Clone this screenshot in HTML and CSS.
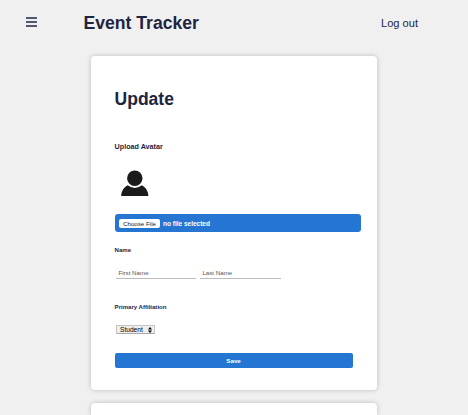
FILE: index.html
```html
<!DOCTYPE html>
<html lang="en">
<head>
<meta charset="utf-8">
<title>Event Tracker</title>
<link rel="stylesheet" href="styles.css">
</head>
<body>
<header class="header">
  <svg class="menu" viewBox="0 0 11 10"><path d="M0 1h11M0 5h11M0 9h11" stroke="#1f2440" stroke-width="1.700"/></svg>
  <h1 class="brand">Event Tracker</h1>
  <a class="logout">Log out</a>
</header>
<main class="content">
  <form class="card">
    <h2 class="title">Update</h2>
    <label class="label label-avatar">Upload Avatar</label>
    <svg class="avatar" viewBox="0 0 28 27"><path d="M.2 26c0-5 3-9.600 7.800-11.200h11.500c4.800 1.600 7.800 6.200 7.800 11.200z"/><ellipse cx="13.800" cy="8.500" rx="9.500" ry="9.600" fill="#fff"/><circle cx="13.800" cy="8.200" r="7.700"/></svg>
    <div class="file"><span class="choose">Choose File</span><span class="filename">no file selected</span></div>
    <label class="label label-name">Name</label>
    <div class="names">
      <div class="field">First Name</div>
      <div class="field">Last Name</div>
    </div>
    <label class="label label-affiliation">Primary Affiliation</label>
    <div class="select"><span>Student</span><svg class="arrows" viewBox="0 0 4 6"><path d="M0 2.500 2 0l2 2.500zM0 3.500 2 6l2-2.500z"/></svg></div>
    <div class="save">Save</div>
  </form>
  <section class="card card-next"></section>
</main>
</body>
</html>
```
FILE: styles.css
```css
* { box-sizing: border-box; }
body {
  margin: 0;
  height: 415px;
  overflow: hidden;
  background: #f0f0f0;
  color: #1f2440;
  font-family: "Liberation Sans", Arial, sans-serif;
}
.header {
  display: flex;
  align-items: center;
  height: 44px;
  padding: 0 50px 0 26px;
}
.menu { width: 11px; height: 10px; }
.brand {
  margin: 0 0 0 46.500px;
  padding-top: 1px;
  font-size: 17.600px;
  line-height: 20px;
  white-space: nowrap;
}
.logout { margin-left: auto; padding-top: 1px; font-size: 11.100px; line-height: 14px; }
.content {
  display: flex;
  flex-direction: column;
  gap: 13px;
  width: 286px;
  height: 359px;
  margin: 12px 0 0 91px;
}
.card {
  display: flex;
  flex-direction: column;
  align-items: flex-start;
  flex: none;
  height: 334px;
  padding: 33px 16px 0 23.600px;
  background: #fff;
  border-radius: 4px;
  box-shadow: 0 0 5px rgba(0, 0, 0, .22);
}
.card-next {
  height: 12px;
  padding: 0;
  border-radius: 4px 4px 0 0;
}
.title { margin: 0; font-size: 17.500px; line-height: 20px; }
.label { font-size: 6.050px; font-weight: bold; line-height: 8px; }
.label-avatar { margin-top: 33px; font-size: 7.200px; line-height: 10px; }
.avatar { width: 28px; height: 27px; margin: 18px 0 0 6.400px; fill: #1b1b1b; }
.file {
  display: flex;
  align-items: center;
  gap: 3px;
  width: 246px;
  height: 18px;
  margin-top: 17px;
  padding-left: 4.400px;
  border-radius: 3px;
  background: #2476d2;
  color: #fff;
  font-size: 6.500px;
  font-weight: bold;
}
.choose {
  width: 41px;
  height: 9px;
  border-radius: 2px;
  background: #fff;
  color: #222;
  font-size: 6.200px;
  font-weight: normal;
  line-height: 10px;
  text-align: center;
}
.label-name { margin-top: 14px; }
.names { display: flex; gap: 4px; margin: 15px 0 0 1.400px; }
.field {
  width: 80px;
  height: 10px;
  padding-left: 2.400px;
  border-bottom: 1px solid #bbb;
  color: #555;
  font-size: 6.200px;
  line-height: 7px;
}
.field + .field { width: 81px; }
.label-affiliation { margin-top: 24px; }
.select {
  display: flex;
  align-items: center;
  justify-content: space-between;
  width: 39px;
  height: 9px;
  margin: 14px 0 0 1.400px;
  padding: 0 2px 0 3px;
  border: 1px solid #c4c4c4;
  border-bottom-color: #a8a8a8;
  border-radius: 1px;
  background: #efefef;
  color: #000;
  font-size: 6.600px;
  line-height: 8px;
}
.arrows { width: 4px; height: 6px; }
.save {
  width: 238px;
  height: 15px;
  margin-top: 19px;
  border-radius: 2px;
  background: #2476d2;
  color: #fff;
  font-size: 6.200px;
  font-weight: bold;
  line-height: 16px;
  text-align: center;
}
```
